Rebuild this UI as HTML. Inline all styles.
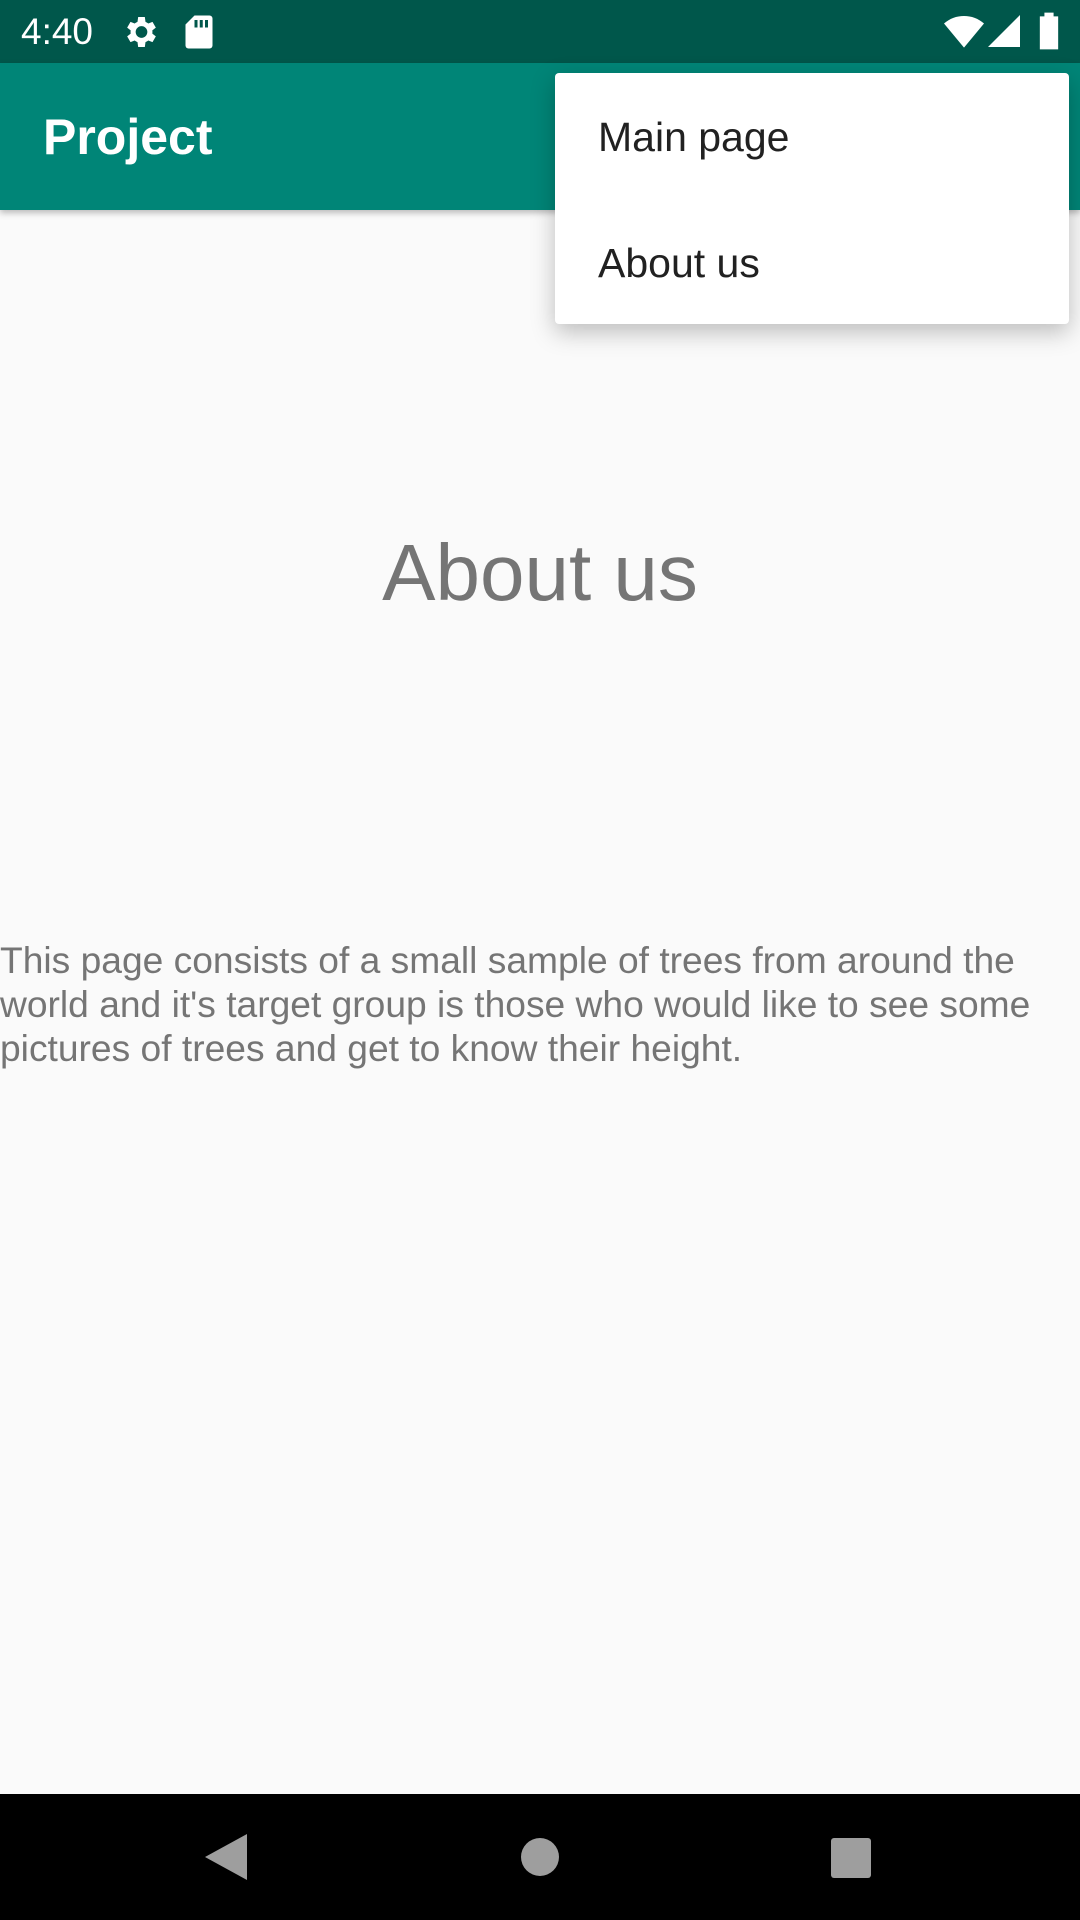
<!DOCTYPE html>
<html><head><meta charset="utf-8"><style>
*{margin:0;padding:0;box-sizing:border-box}
body{width:1080px;height:1920px;background:#fafafa;position:relative;overflow:hidden;font-family:"Liberation Sans",sans-serif}
.sb{position:absolute;left:0;top:0;width:1080px;height:63px;background:#00574b;color:#fff}
.ab{position:absolute;left:0;top:63px;width:1080px;height:147px;background:#008577;box-shadow:0 3px 6px rgba(0,0,0,.25)}
.menu{position:absolute;left:555px;top:73px;width:514px;height:251px;background:#fff;border-radius:4px;box-shadow:0 8px 24px rgba(0,0,0,.25)}
.mi{position:absolute;left:43px;font-size:41px;color:#212121;line-height:50px}
.nav{position:absolute;left:0;top:1794px;width:1080px;height:126px;background:#000}
</style></head><body>
<div class="sb">
<div style="position:absolute;left:21px;top:12px;font-size:37px;line-height:40px">4:40</div>
<svg style="position:absolute;left:120px;top:12px" width="40" height="40" viewBox="0 0 24 24"><path fill="#fff" d="M19.4 13a7.5 7.5 0 0 0 0-2l2.1-1.6-2-3.5-2.5 1a7 7 0 0 0-1.7-1L14.9 3h-4l-.4 2.9a7 7 0 0 0-1.7 1l-2.5-1-2 3.5L6.4 11a7.5 7.5 0 0 0 0 2l-2.1 1.6 2 3.5 2.5-1a7 7 0 0 0 1.7 1l.4 2.9h4l.4-2.9a7 7 0 0 0 1.7-1l2.5 1 2-3.5zM12.9 15.5a3.5 3.5 0 1 1 0-7 3.5 3.5 0 0 1 0 7z"/></svg>
<svg style="position:absolute;left:184px;top:14px" width="30" height="36" viewBox="0 0 20 24"><path fill="#fff" d="M7 1h10a2 2 0 0 1 2 2v18a2 2 0 0 1-2 2H3a2 2 0 0 1-2-2V7z"/><path fill="#00574b" d="M7 4h2v5H7zM10.5 4h2v5h-2zM14 4h2v5h-2z"/></svg>
<svg style="position:absolute;left:944px;top:14px" width="40" height="34" viewBox="0 0 24 20"><path fill="#fff" d="M12 20L0 5.5C3.5 2.5 7.5 1 12 1s8.5 1.5 12 4.5z"/></svg>
<svg style="position:absolute;left:988px;top:14px" width="32" height="34" viewBox="0 0 20 20"><path fill="#fff" d="M20 0v20H0z"/></svg>
<svg style="position:absolute;left:1038px;top:12px" width="22" height="38" viewBox="0 0 12 20"><path fill="#fff" d="M3.5 0h5v2H11v18H1V2h2.5z"/></svg>
</div>
<div class="ab"><div style="position:absolute;left:43px;top:46px;font-size:50px;font-weight:bold;color:#fff;line-height:56px">Project</div></div>
<div style="position:absolute;left:0;top:573px;width:1080px;text-align:center;font-size:80px;color:#757575;line-height:90px;margin-top:-45px">About us</div>
<div style="position:absolute;left:0;top:938px;width:1075px;font-size:37.2px;color:#757575;line-height:44px">This page consists of a small sample of trees from around the world and it's target group is those who would like to see some pictures of trees and get to know their height.</div>
<div class="menu"><div class="mi" style="top:39px">Main page</div><div class="mi" style="top:165px">About us</div></div>
<div class="nav">
<svg style="position:absolute;left:205px;top:40px" width="42" height="46" viewBox="0 0 42 46"><path fill="#9e9e9e" d="M42 0v46L0 23z"/></svg>
<div style="position:absolute;left:521px;top:44px;width:38px;height:38px;border-radius:50%;background:#9e9e9e"></div>
<div style="position:absolute;left:831px;top:44px;width:40px;height:40px;border-radius:3px;background:#9e9e9e"></div>
</div>
</body></html>
